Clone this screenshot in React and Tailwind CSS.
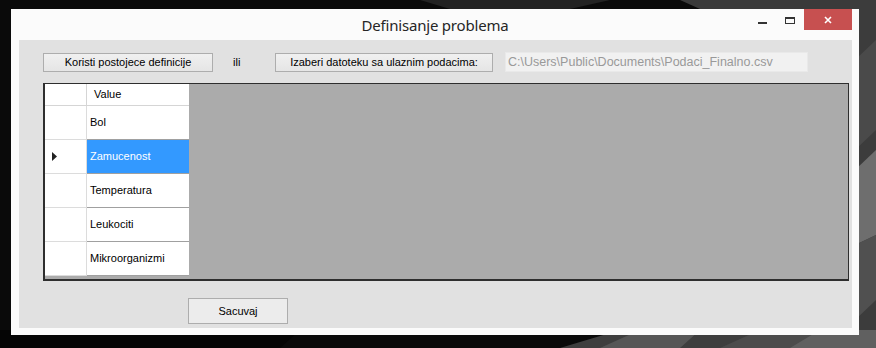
import React from "react";

const rows = ["Bol", "Zamucenost", "Temperatura", "Leukociti", "Mikroorganizmi"];
const SELECTED = 1;

function Wallpaper() {
  return (
    <svg className="absolute inset-0" width="876" height="348" viewBox="0 0 876 348">
      <rect width="876" height="348" fill="#0a0a0a" />
      <polygon points="420,0 610,0 570,9 450,9" fill="#222" />
      <polygon points="680,0 876,0 876,60 850,9 700,9" fill="#3a3a3a" />
      <polygon points="850,0 876,0 876,348 850,348" fill="#3c3c3c" />
      <polygon points="855,60 876,40 876,130 855,150" fill="#4a4a4a" />
      <polygon points="855,170 876,150 876,235 855,245" fill="#6e6e6e" />
      <polygon points="855,245 876,235 876,300 855,320" fill="#505050" />
      <polygon points="560,348 620,330 876,330 876,348" fill="#3e3e3e" />
      <polygon points="600,348 640,330 700,330 680,348" fill="#565656" />
      <polygon points="720,348 760,330 876,330 876,348" fill="#4c4c4c" />
      <polygon points="790,348 820,330 876,330 876,348" fill="#606060" />
      <polygon points="0,330 300,330 280,348 0,348" fill="#050505" />
    </svg>
  );
}

function WinButton({ className = "", children }) {
  return (
    <div
      className={
        "flex items-center justify-center border border-[#adadad] bg-gradient-to-b from-[#f0f0f0] to-[#e5e5e5] text-[11px] text-black font-['Liberation_Sans',Arial,sans-serif] leading-none " +
        className
      }
    >
      {children}
    </div>
  );
}

export default function App() {
  return (
    <div className="relative w-[876px] h-[348px] overflow-hidden bg-[#0a0a0a]">
      <Wallpaper />
      <div className="relative flex flex-col pt-[9px] pl-[11px]">
        {/* window */}
        <div className="w-[848px] h-[326px] bg-[#fbfbfb] flex flex-col">
          {/* title bar */}
          <div className="h-[31px] grid grid-cols-[1fr_auto_1fr]">
            <div />
            <div className="flex items-center text-[15px] text-[#262626] font-['Noto_Sans',sans-serif] tracking-[-0.2px] pt-[1px]">
              Definisanje problema
            </div>
            <div className="flex justify-end items-start pr-[7px]">
              <div className="mt-[13px] w-[9px] h-[2px] bg-[#333]" />
              <div className="ml-[18px] mt-[8px] w-[10px] h-[7px] border border-t-2 border-[#333]" />
              <div className="ml-[9px] w-[48px] h-[21px] bg-[#c75050] flex items-center justify-center">
                <svg width="8" height="8" viewBox="0 0 8 8">
                  <path d="M1 1 L7 7 M7 1 L1 7" stroke="#fff" strokeWidth="1.6" />
                </svg>
              </div>
            </div>
          </div>
          {/* client area */}
          <div className="ml-[8px] w-[833px] h-[288px] bg-[#e1e1e1] flex flex-col pl-[24px] pt-[12px] font-['Liberation_Sans',Arial,sans-serif]">
            <div className="flex items-center h-[20px]">
              <WinButton className="w-[170px] h-[19px] mt-[1px]">Koristi postojece definicije</WinButton>
              <div className="w-[62px] pl-[20px] text-[11px] text-black">ili</div>
              <WinButton className="w-[218px] h-[19px] mt-[1px]">Izaberi datoteku sa ulaznim podacima:</WinButton>
              <div className="ml-[12px] w-[303px] h-[20px] bg-[#f1f1f1] border border-[#e9e9e9] flex items-center pl-[2px] text-[12.5px] text-[#999] leading-none">
                C:\Users\Public\Documents\Podaci_Finalno.csv
              </div>
            </div>
            {/* grid */}
            <div className="mt-[11px] w-[806px] h-[198px] bg-[#ababab] border border-[#2e2e2e] border-b-2 border-l-2 flex flex-col">
              <div className="flex flex-col w-[144px] text-[11px] text-black leading-none">
                <div className="flex h-[22px] bg-white border-b border-[#d5d5d5]">
                  <div className="w-[42px] border-r border-[#d5d5d5]" />
                  <div className="w-[102px] flex items-center pl-[7px]">Value</div>
                </div>
                {rows.map((r, i) => (
                  <div key={r} className="flex h-[34px]">
                    <div className="w-[42px] bg-white border-r border-b border-[#dcdcdc] flex items-center pl-[7px]">
                      {i === SELECTED && (
                        <svg width="5" height="9" viewBox="0 0 5 9">
                          <polygon points="0,0 5,4.5 0,9" fill="#222" />
                        </svg>
                      )}
                    </div>
                    <div
                      className={
                        "w-[102px] border-b border-[#a0a0a0] flex items-center pl-[3px] " +
                        (i === SELECTED ? "bg-[#3399ff] text-white" : "bg-white text-black")
                      }
                    >
                      {r}
                    </div>
                  </div>
                ))}
              </div>
            </div>
            <div className="mt-[17px] ml-[145px]">
              <WinButton className="w-[100px] h-[26px] bg-none bg-[#ececec]">Sacuvaj</WinButton>
            </div>
          </div>
        </div>
      </div>
    </div>
  );
}
